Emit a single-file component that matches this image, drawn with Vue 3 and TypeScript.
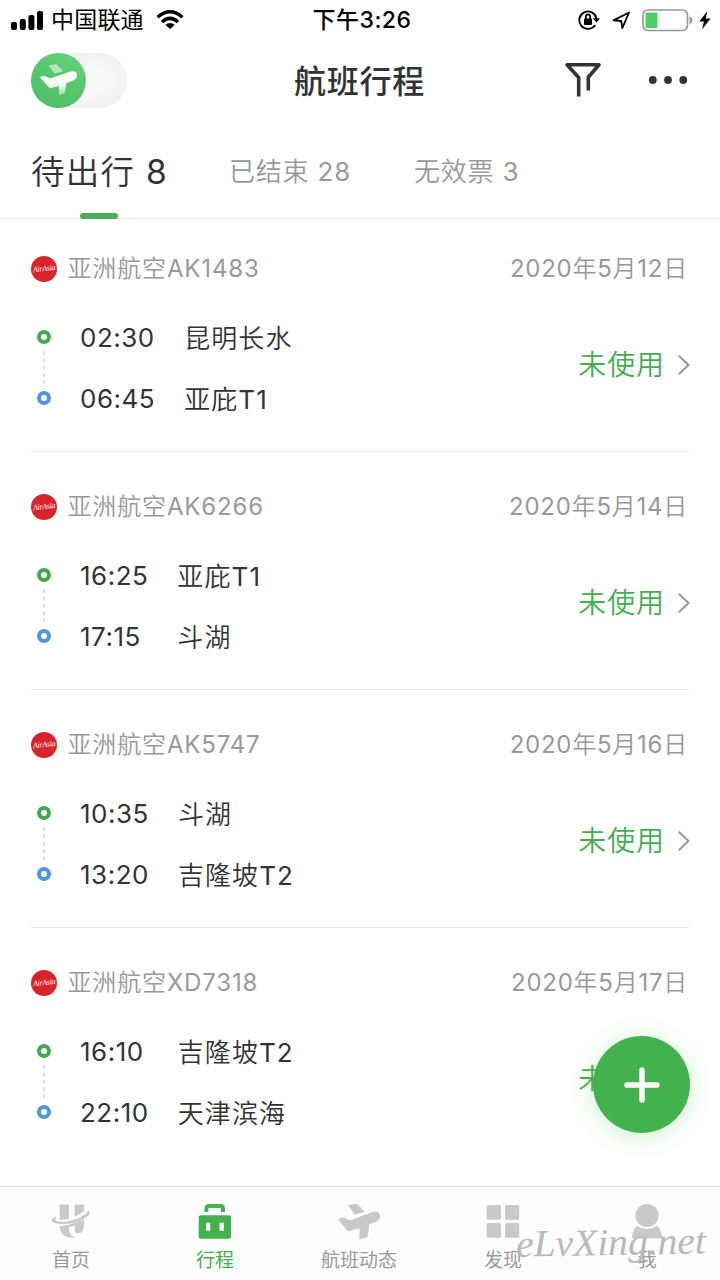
<script setup lang="ts">
interface Flight {
  flightNo: string
  date: string
  departTime: string
  departPlace: string
  arriveTime: string
  arrivePlace: string
}

const flights: Flight[] = [
  { flightNo: 'AK1483', date: '2020年5月12日', departTime: '02:30', departPlace: '昆明长水', arriveTime: '06:45', arrivePlace: '亚庇T1' },
  { flightNo: 'AK6266', date: '2020年5月14日', departTime: '16:25', departPlace: '亚庇T1', arriveTime: '17:15', arrivePlace: '斗湖' },
  { flightNo: 'AK5747', date: '2020年5月16日', departTime: '10:35', departPlace: '斗湖', arriveTime: '13:20', arrivePlace: '吉隆坡T2' },
  { flightNo: 'XD7318', date: '2020年5月17日', departTime: '16:10', departPlace: '吉隆坡T2', arriveTime: '22:10', arrivePlace: '天津滨海' },
]
</script>

<template>
  <div class="screen">
    <div class="status-bar">
      <div class="carrier">
        <svg width="33" height="20" viewBox="0 0 33 20">
          <rect x="0" y="12" width="6" height="8" rx="2" />
          <rect x="8.8" y="9" width="6" height="11" rx="2" />
          <rect x="17.4" y="5" width="6" height="15" rx="2" />
          <rect x="26" y="1" width="6" height="19" rx="2" />
        </svg>
        <span class="carrier-name">中国联通</span>
        <svg class="wifi" width="28" height="20" viewBox="0 0 28 20" fill="none" stroke="#000" stroke-width="3.4">
          <path d="M1.6 7.2 Q14 -3.6 26.4 7.2" />
          <path d="M6 12 Q14 4.8 22 12" />
          <path d="M14 19 L9.3 14.8 Q14 11 18.7 14.8 Z" fill="#000" stroke="none" />
        </svg>
      </div>
      <span class="clock">下午3:26</span>
      <div class="indicators">
        <svg width="22" height="20" viewBox="0 0 22 20" fill="none" stroke="#000" stroke-width="1.8">
          <path d="M17.2 15 A8.7 8.7 0 1 1 18.5 8.5" />
          <path d="M14.7 8.3 H22 L18.5 12.5 Z" fill="#000" stroke="none" />
          <rect x="6" y="8.6" width="8" height="6.4" rx=".8" fill="#000" stroke="none" />
          <path d="M7.8 9 V7 A2.2 2.6 0 0 1 12.2 7 V9" />
        </svg>
        <svg class="locate" width="19" height="19" viewBox="0 0 19 19" fill="none" stroke="#000" stroke-width="1.9" stroke-linejoin="round">
          <path d="M1.5 9.4 L17 1.5 L10.4 17 L9.2 10 Z" />
        </svg>
        <svg class="battery" width="51" height="23" viewBox="0 0 51 23">
          <rect x="1" y="1" width="44.5" height="20.5" rx="5" fill="#fff" stroke="#999" stroke-width="1.7" />
          <rect x="3.5" y="3.5" width="12" height="15.5" rx="1" fill="#4fd162" />
          <path d="M47.5 7.5 Q50.5 8.5 50.5 11.3 T47.5 15 Z" fill="#999" />
        </svg>
        <svg class="bolt" width="12" height="19" viewBox="0 0 12 19">
          <path d="M8.4 0 L0.3 10.4 H5 L3 18.5 L11.5 7.5 H6.7 Z" />
        </svg>
      </div>
    </div>

    <header class="nav-bar">
      <div class="mode-switch">
        <div class="knob">
          <svg width="40" height="34" viewBox="0 0 40 34">
            <defs>
              <linearGradient id="wing" x1="0" y1="0" x2="0" y2="1">
                <stop offset="0" stop-color="#fff" />
                <stop offset=".6" stop-color="#f1fbf3" />
                <stop offset="1" stop-color="#9fdfac" />
              </linearGradient>
            </defs>
            <path d="M9.5 2.5 L17 1 L24.5 8.2 L15.5 10.5 Z" fill="#b3e5bc" />
            <path d="M.7 14 L5.7 12.8 L11 15.4 L31.5 8.5 Q37 7.5 38.2 11.5 Q38.8 15.6 33.5 17.8 L27.5 20 L25.6 30.5 L20 32 L19.8 23 L11 25.5 Z" fill="url(#wing)" />
          </svg>
        </div>
      </div>
      <h1 class="title">航班行程</h1>
      <div class="nav-actions">
        <svg width="38" height="36" viewBox="0 0 38 36" fill="none" stroke="#333" stroke-width="3.6" stroke-linejoin="round">
          <path d="M14.7 34.5 V15.5 L3 2.8 H35 L24.3 15.2 V28.6" />
        </svg>
        <svg class="more" width="40" height="10" viewBox="0 0 40 10" fill="#333">
          <circle cx="4.8" cy="5" r="3.9" /><circle cx="20" cy="5" r="3.9" /><circle cx="35.3" cy="5" r="3.9" />
        </svg>
      </div>
    </header>

    <nav class="tabs">
      <span class="tab active">待出行 8</span>
      <span class="tab ended">已结束 28</span>
      <span class="tab invalid">无效票 3</span>
    </nav>

    <main class="list">
      <section v-for="flight in flights" :key="flight.flightNo" class="flight">
        <div class="flight-head">
          <span class="airline-logo"><span class="logo-text">AirAsia</span></span>
          <span class="airline">亚洲航空{{ flight.flightNo }}</span>
          <span class="date">{{ flight.date }}</span>
        </div>
        <div class="flight-body">
          <div class="track">
            <i class="dot depart"></i>
            <svg width="2" height="33" viewBox="0 0 2 33">
              <path d="M1 0 V33" stroke="#d3d3d3" stroke-width="1.5" stroke-dasharray="4 3.4" />
            </svg>
            <i class="dot arrive"></i>
          </div>
          <div class="route">
            <span class="time">{{ flight.departTime }}</span><span class="place">{{ flight.departPlace }}</span>
            <span class="time">{{ flight.arriveTime }}</span><span class="place">{{ flight.arrivePlace }}</span>
          </div>
          <div class="state">
            <span>未使用</span>
            <svg width="14" height="22" viewBox="0 0 14 22" fill="none" stroke="#999" stroke-width="2">
              <path d="M1.8 1.8 L11.5 11 L1.8 20.2" />
            </svg>
          </div>
        </div>
      </section>
    </main>

    <button class="add" aria-label="添加">
      <svg width="36" height="36" viewBox="0 0 36 36" stroke="#fff" stroke-width="5.4" stroke-linecap="round">
        <path d="M18 3 V33 M3 18 H33" />
      </svg>
    </button>

    <footer class="tab-bar">
      <div class="entry">
        <svg width="40" height="36" viewBox="0 0 40 36" fill="#c9c9c9">
          <path d="M8.7 1 H18 V15.2 Q13 16.6 8.7 16.6 Z" />
          <path d="M23.7 1 H33 V7.5 Q29 11 23.7 13.2 Z" />
          <path d="M8.7 22.8 Q20 22 33 15.5 V22 Q32.5 29 27.5 30 Q25 30 23.7 28.5 V22 L18 23.8 V26 Q18.2 32.5 24.5 34 Q9.2 35.5 8.7 22.8 Z" />
          <path d="M6 13 Q2.5 16 6 17.5 Q13 20 26 15.2 Q36.5 11 37.2 6.5 Q41.5 10.5 33.5 14.8 Q22 21.8 8 20.6 Q-3.5 18 2 14.5 Q3.5 13.2 6 13 Z" />
        </svg>
        <span>首页</span>
      </div>
      <div class="entry current">
        <svg width="34" height="36" viewBox="0 0 34 36">
          <path d="M8.4 8.5 V5.6 Q8.4 2.4 11 2.4 H22.6 Q25 2.4 25 5.6 V8.5" fill="none" stroke="#43b14c" stroke-width="4" />
          <path fill-rule="evenodd" d="M2.5 11.8 H31 Q33 11.8 33 13.8 V33 Q33 35.3 31 35.3 H2.5 Q.7 35.3 .7 33 V13.8 Q.7 11.8 2.5 11.8 Z M8 19.2 V27.3 H12.2 V19.2 Z M21.5 19.2 V27.3 H25.8 V19.2 Z" fill="#43b14c" />
        </svg>
        <span>行程</span>
      </div>
      <div class="entry">
        <svg width="44" height="37" viewBox="0 0 44 37" fill="#c9c9c9">
          <path d="M11.2 2.3 L19.5 .5 L28 8.7 L17.5 11.6 Z" />
          <path d="M1.2 16.2 L6.5 14.2 L13.2 17.6 L34.5 9.2 Q42.3 7 43.1 13 Q43 17.4 38.3 19 L32.5 21.1 L30.5 34.2 L22.2 36.3 L22.6 25.3 L11 28.6 Z" />
        </svg>
        <span>航班动态</span>
      </div>
      <div class="entry">
        <svg width="34" height="36" viewBox="0 0 34 36" fill="#c9c9c9">
          <rect x=".7" y="1.4" width="14.3" height="14.8" rx="1.5" /><rect x="19" y="1.4" width="14.3" height="14.8" rx="1.5" />
          <rect x=".7" y="19.5" width="14.3" height="14.8" rx="1.5" /><rect x="19" y="19.5" width="14.3" height="14.8" rx="1.5" />
        </svg>
        <span>发现</span>
      </div>
      <div class="entry">
        <svg width="32" height="36" viewBox="0 0 32 36" fill="#c9c9c9">
          <circle cx="16" cy="12" r="11.6" />
          <path d="M6.2 22.2 Q16 29 25.8 22.2 Q30 25 31.3 34.7 H.7 Q2 25 6.2 22.2 Z" />
        </svg>
        <span>我</span>
      </div>
    </footer>

    <svg class="watermark" width="210" height="60" viewBox="0 0 210 60">
      <text x="6" y="37" textLength="190" lengthAdjust="spacingAndGlyphs" transform="rotate(-1 100 30)">eLvXing.net</text>
    </svg>
  </div>
</template>

<style>
body { margin: 0; background: #fff; }
</style>

<style scoped>
.screen {
  position: relative;
  width: 720px;
  height: 1280px;
  overflow: hidden;
  background: #fff;
  color: #333;
  font-family: Inter, "Noto Sans CJK SC", sans-serif;
  display: flex;
  flex-direction: column;
}
svg { display: block; flex: none; }
.status-bar {
  height: 40px;
  flex: none;
  display: grid;
  grid-template-columns: 1fr auto 1fr;
  align-items: center;
  padding: 0 9px 0 11px;
  color: #000;
}
.carrier, .indicators { display: flex; align-items: center; }
.carrier-name { margin-left: 7px; font-size: 23px; line-height: 30px; letter-spacing: .2px; }
.wifi { margin-left: 12px; }
.clock { margin-left: 2px; font-size: 23px; line-height: 30px; font-weight: 500; letter-spacing: .5px; }
.indicators { justify-content: flex-end; }
.locate { margin-left: 12px; }
.battery { margin-left: 11px; }
.bolt { margin-left: 6px; }
.nav-bar {
  height: 80px;
  flex: none;
  display: grid;
  grid-template-columns: 1fr auto 1fr;
  align-items: center;
  padding: 0 32px 0 31px;
}
.mode-switch {
  width: 96px;
  height: 55px;
  border-radius: 28px;
  background: radial-gradient(ellipse at 55% 50%, #f8f8f8 35%, #ececec 100%);
}
.knob {
  width: 55px;
  height: 55px;
  border-radius: 50%;
  background: linear-gradient(25deg, #4cbd62, #65d07b);
  display: flex;
  align-items: center;
  justify-content: center;
}
.title { margin: 0; padding-top: 4px; font-size: 32px; line-height: 40px; font-weight: 500; letter-spacing: .8px; }
.nav-actions { display: flex; justify-content: flex-end; align-items: center; }
.more { margin-left: 46px; }
.tabs {
  height: 99px;
  flex: none;
  box-sizing: border-box;
  border-bottom: 1px solid #e5e8e8;
  display: flex;
  align-items: stretch;
  padding-left: 31px;
}
.tab, .airline, .date, .route, .state { font-family: Inter, "Noto Sans CJK SC DemiLight", "Noto Sans CJK SC", sans-serif; font-weight: 400; }
.tab { font-size: 26px; line-height: 104px; color: #999; letter-spacing: .8px; white-space: nowrap; }
.tab.active { position: relative; width: 136px; font-size: 33.5px; color: #333; letter-spacing: 1.3px; }
.tab.active::after {
  content: "";
  position: absolute;
  left: 49px;
  bottom: -1px;
  width: 38px;
  height: 6px;
  border-radius: 3px;
  background: #4bad57;
}
.ended { width: 122px; margin-left: 62px; }
.invalid { margin-left: 63px; }
.list { flex: 1; min-height: 0; overflow: hidden; margin-top: -5px; }
.flight { height: 238px; box-sizing: border-box; margin: 0 31px; padding-top: 35px; border-bottom: 1px solid #ebebeb; }
.flight:last-child { border-bottom: 0; }
.flight-head { height: 40px; display: flex; align-items: center; color: #999; }
.airline-logo {
  width: 26px;
  height: 26px;
  border-radius: 50%;
  background: #d9232b;
  display: flex;
  align-items: center;
  justify-content: center;
}
.logo-text { color: #fff; font: italic 400 8px/8px "Liberation Serif", serif; letter-spacing: -.3px; transform: rotate(-6deg); }
.airline { margin-left: 10.5px; font-size: 24px; letter-spacing: .85px; line-height: 40px; }
.date { margin-left: auto; margin-right: 1px; font-size: 24px; letter-spacing: .75px; line-height: 40px; }
.flight-body { display: flex; height: 122px; padding-top: 17px; }
.track { width: 26px; display: flex; flex-direction: column; align-items: center; padding-top: 24px; gap: 7px; box-sizing: border-box; }
.dot { box-sizing: border-box; width: 14px; height: 14px; border-radius: 50%; border: 4px solid #43a950; flex: none; }
.dot.arrive { border-color: #4f96e2; }
.route {
  display: grid;
  grid-template-columns: auto auto;
  grid-template-rows: 61px 61px;
  column-gap: 29px;
  align-items: center;
  margin-left: 23px;
  font-size: 26px;
  letter-spacing: .5px;
}
.time { padding-top: 1px; }
.place { padding-bottom: 1px; letter-spacing: 1.1px; }
.state { margin-left: auto; margin-right: -2px; height: 117px; display: flex; align-items: center; gap: 12px; color: #43ad4f; font-size: 28px; letter-spacing: .9px; }
.state span { padding-bottom: 3px; }
.add {
  position: absolute;
  left: 593px;
  top: 1036px;
  width: 97px;
  height: 97px;
  border: 0;
  padding: 0;
  border-radius: 50%;
  background: #43b14c;
  box-shadow: 0 3px 25px rgba(80, 210, 95, .3);
  display: flex;
  align-items: center;
  justify-content: center;
}
.tab-bar {
  height: 94px;
  flex: none;
  box-sizing: border-box;
  border-top: 1px solid #e3e3e3;
  background: #fdfdfd;
  display: grid;
  grid-template-columns: repeat(5, 144px);
  margin-left: -1px;
}
.entry { display: flex; flex-direction: column; align-items: center; padding-top: 16px; color: #999; font-size: 19px; line-height: 26px; }
.entry svg { height: 37px; }
.entry span { margin-top: 8px; }
.current { color: #43ad4f; }
.watermark { position: absolute; left: 510px; top: 1218px; overflow: visible; }
.watermark text { font: italic 38px "Liberation Serif", serif; fill: #b9b9b9; }
</style>
